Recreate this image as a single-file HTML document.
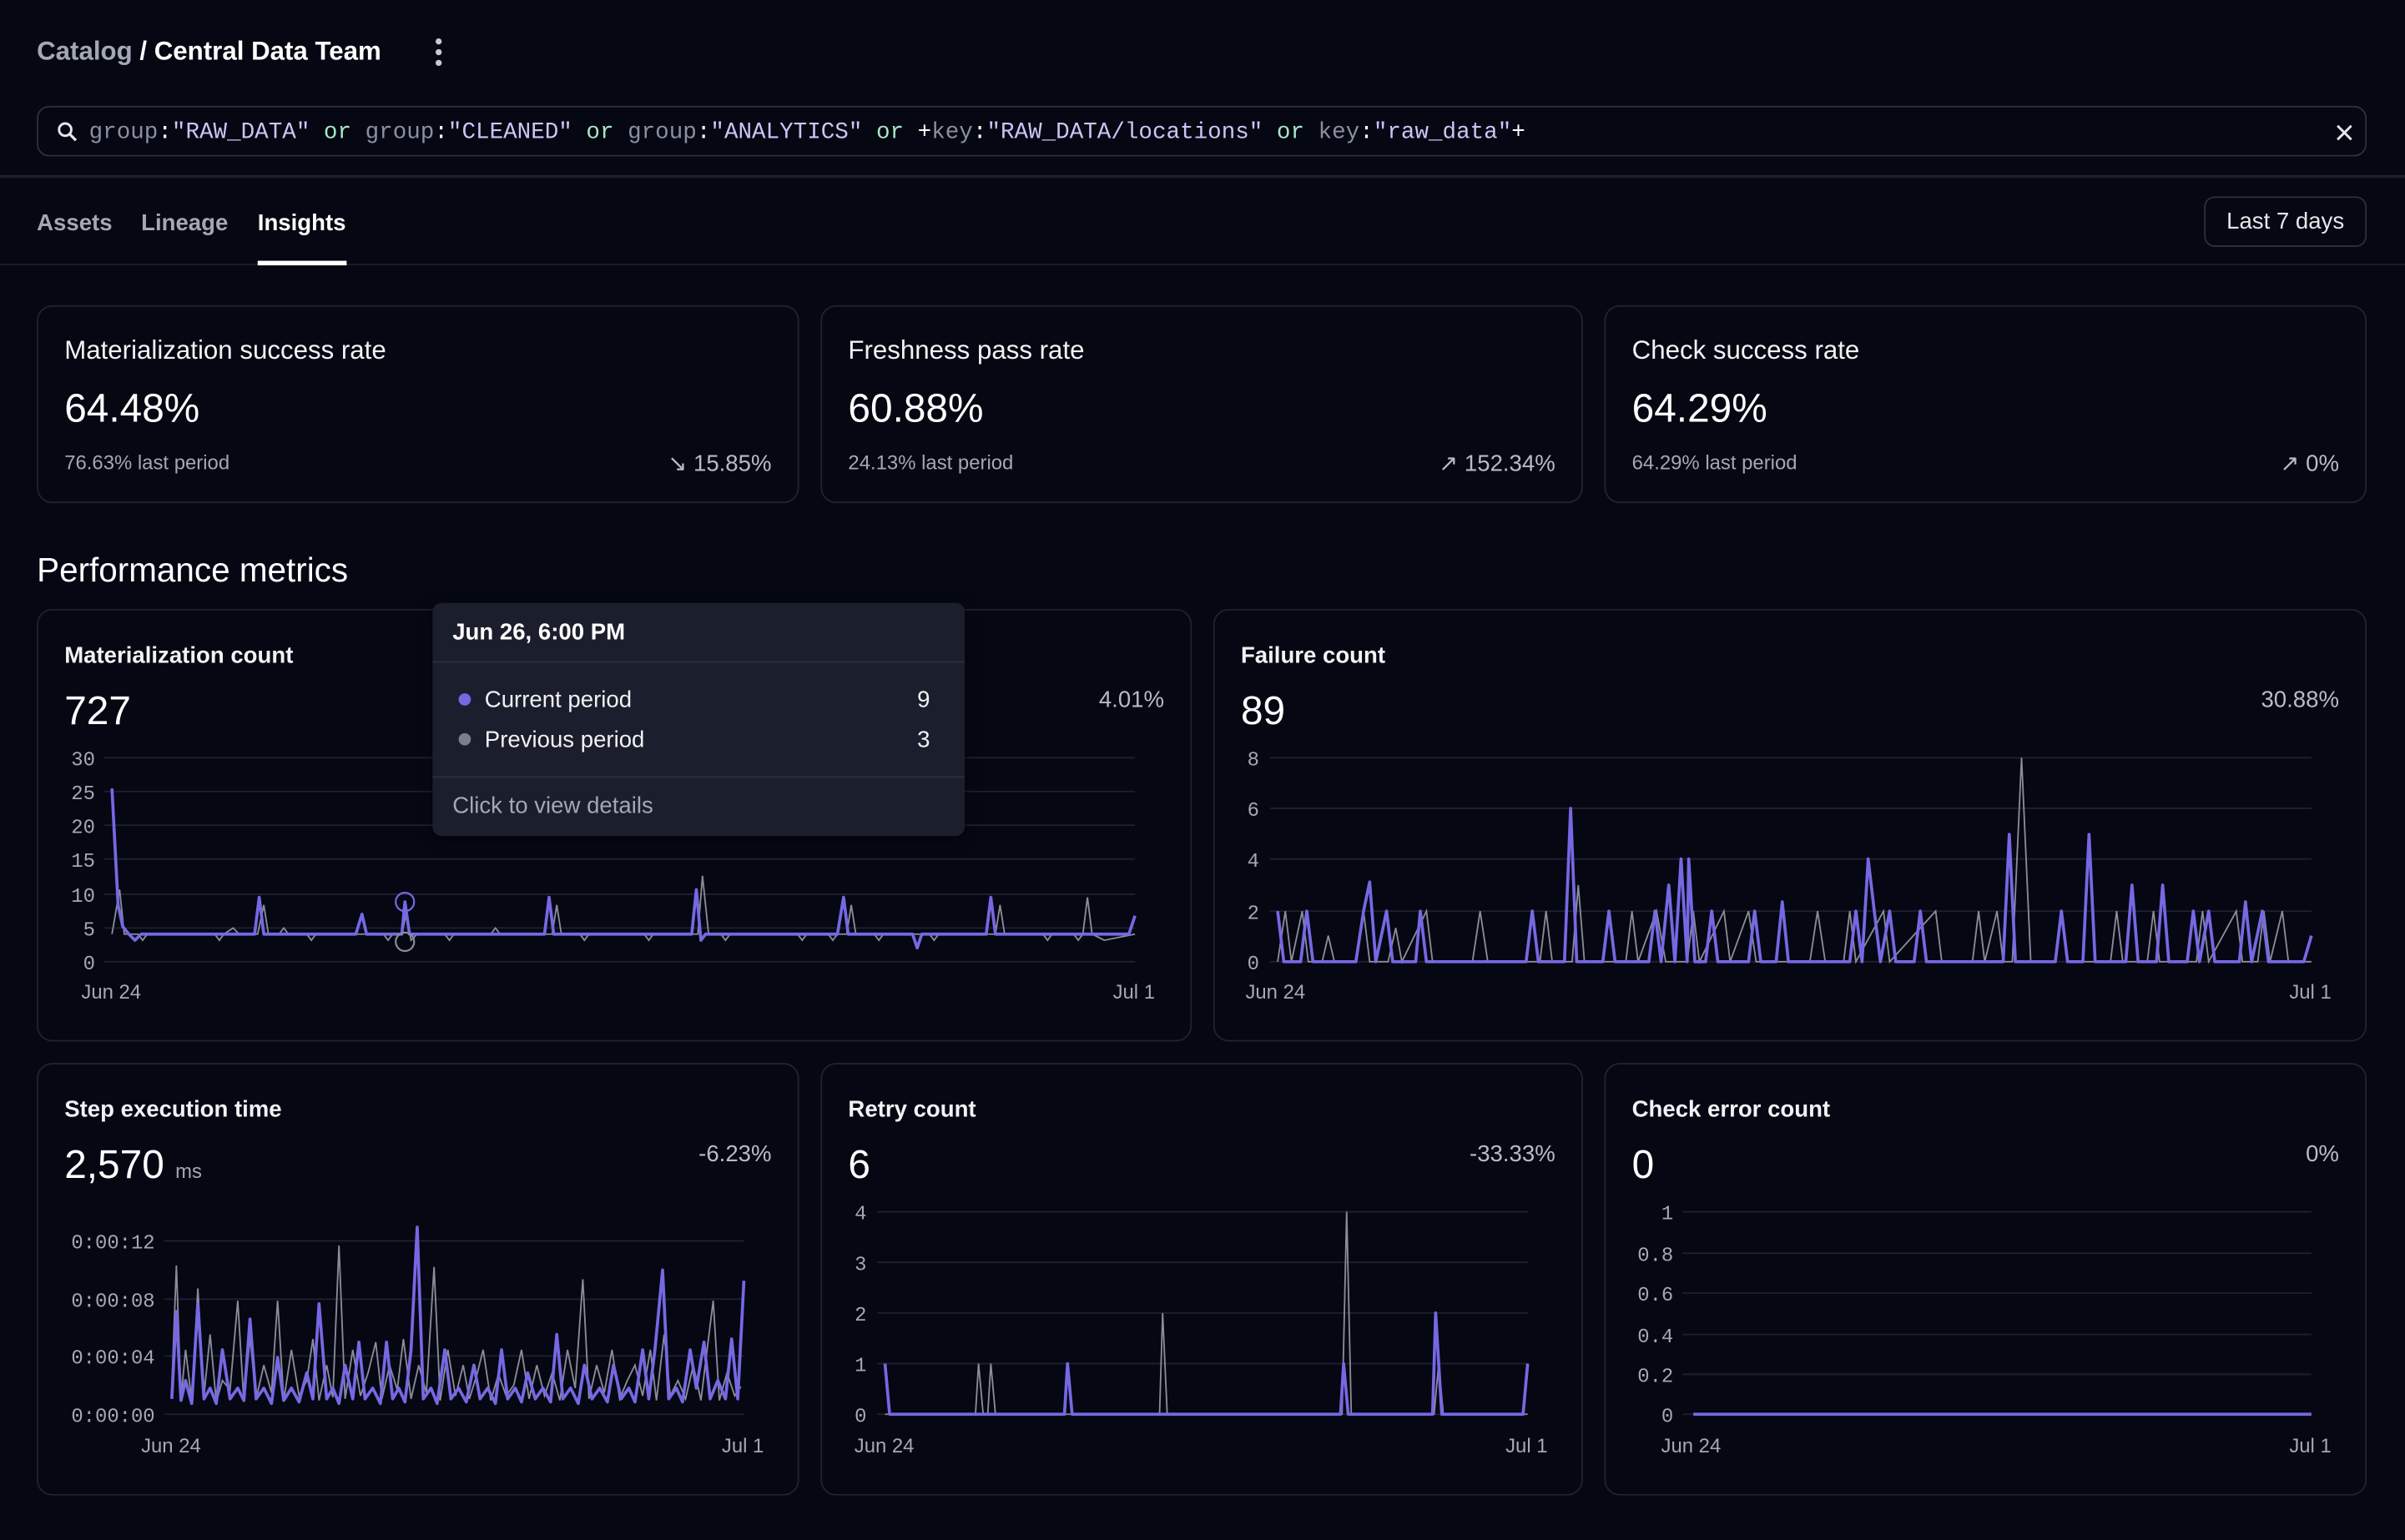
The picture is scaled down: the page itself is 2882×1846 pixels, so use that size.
<!DOCTYPE html>
<html><head><meta charset="utf-8">
<style>
html,body{margin:0;padding:0;background:#050713;overflow:hidden;width:2882px;height:1846px}
#w{position:absolute;left:0;top:0;width:1568px;height:1004px;transform:scale(1.83801,1.83865);transform-origin:0 0;font-family:"Liberation Sans",sans-serif;color:#fff}
.a{position:absolute;white-space:nowrap}
.card{position:absolute;border:1px solid #1f2231;border-radius:10px;box-sizing:border-box;background:#050713}
.t{font-size:17px;color:#f2f2f5}
.v{font-size:26px;color:#fff}
.s{font-size:13px;color:#a4a7b4}
.tr{font-size:15px;color:#b8bbc6}
.ct{font-size:15px;font-weight:bold;color:#f2f2f5}
.m{font-family:"Liberation Mono",monospace}
.ax{font-family:"Liberation Mono",monospace;font-size:13px;fill:#a4a7b4}
.xl{font-size:13px;fill:#a4a7b4;font-family:"Liberation Sans",sans-serif}
</style></head><body><div id="w">
<div class="a" style="left:24px;top:24px;font-size:17px;font-weight:bold"><span style="color:#a4a7b4">Catalog</span> / Central Data Team</div>
<svg class="a" style="left:280px;top:24px" width="12" height="20"><circle cx="6" cy="3" r="2" fill="#c8cad3"/><circle cx="6" cy="10" r="2" fill="#c8cad3"/><circle cx="6" cy="17" r="2" fill="#c8cad3"/></svg>
<div class="a" style="left:24px;top:69px;width:1519px;height:33px;border:1px solid #2c2f3d;border-radius:8px;box-sizing:border-box"></div>
<svg class="a" style="left:37px;top:79px" width="14" height="14"><circle cx="5.5" cy="5.5" r="4" stroke="#e6e6ea" stroke-width="1.6" fill="none"/><path d="M8.5 8.5L12.5 12.5" stroke="#e6e6ea" stroke-width="1.8"/></svg>
<div class="a m" style="left:58px;top:78px;font-size:15px;line-height:18px;color:#fff"><span style="color:#8b8fa0">group</span>:<span style="color:#c9c6f6">"RAW_DATA"</span> <span style="color:#a8e6c4">or</span> <span style="color:#8b8fa0">group</span>:<span style="color:#c9c6f6">"CLEANED"</span> <span style="color:#a8e6c4">or</span> <span style="color:#8b8fa0">group</span>:<span style="color:#c9c6f6">"ANALYTICS"</span> <span style="color:#a8e6c4">or</span> +<span style="color:#8b8fa0">key</span>:<span style="color:#c9c6f6">"RAW_DATA/locations"</span> <span style="color:#a8e6c4">or</span> <span style="color:#8b8fa0">key</span>:<span style="color:#c9c6f6">"raw_data"</span>+</div>
<svg class="a" style="left:1523px;top:81px" width="11" height="11"><path d="M1 1L10 10M10 1L1 10" stroke="#e6e6ea" stroke-width="1.6"/></svg>
<div class="a" style="left:0;top:114px;width:1568px;height:2px;background:#1c1f2c"></div>
<div class="a" style="left:24px;top:137px;font-size:15px;font-weight:bold;color:#a4a7b4">Assets</div>
<div class="a" style="left:92px;top:137px;font-size:15px;font-weight:bold;color:#a4a7b4">Lineage</div>
<div class="a" style="left:168px;top:137px;font-size:15px;font-weight:bold;color:#fff">Insights</div>
<div class="a" style="left:0;top:172px;width:1568px;height:1px;background:#1c1f2c"></div>
<div class="a" style="left:168px;top:170px;width:58px;height:3px;background:#fff"></div>
<div class="a" style="left:1437px;top:128px;width:106px;height:33px;border:1px solid #2c2f3d;border-radius:7px;box-sizing:border-box;font-size:15px;line-height:32px;text-align:center;color:#e6e6ea">Last 7 days</div>

<div class="card" style="left:24px;top:199px;width:497px;height:129px"></div>
<div class="card" style="left:535px;top:199px;width:497px;height:129px"></div>
<div class="card" style="left:1046px;top:199px;width:497px;height:129px"></div>
<div class="a t" style="left:42px;top:219px">Materialization success rate</div>
<div class="a v" style="left:42px;top:251px">64.48%</div>
<div class="a s" style="left:42px;top:294px">76.63% last period</div>
<div class="a tr" style="right:1065px;top:293px">↘ 15.85%</div>
<div class="a t" style="left:553px;top:219px">Freshness pass rate</div>
<div class="a v" style="left:553px;top:251px">60.88%</div>
<div class="a s" style="left:553px;top:294px">24.13% last period</div>
<div class="a tr" style="right:554px;top:293px">↗ 152.34%</div>
<div class="a t" style="left:1064px;top:219px">Check success rate</div>
<div class="a v" style="left:1064px;top:251px">64.29%</div>
<div class="a s" style="left:1064px;top:294px">64.29% last period</div>
<div class="a tr" style="right:43px;top:293px">↗ 0%</div>

<div class="a" style="left:24px;top:359px;font-size:22px;color:#fff">Performance metrics</div>

<div class="card" style="left:24px;top:397px;width:753px;height:282px"></div>
<div class="card" style="left:791px;top:397px;width:752px;height:282px"></div>
<div class="card" style="left:24px;top:693px;width:497px;height:282px"></div>
<div class="card" style="left:535px;top:693px;width:497px;height:282px"></div>
<div class="card" style="left:1046px;top:693px;width:497px;height:282px"></div>

<div class="a ct" style="left:42px;top:419px">Materialization count</div>
<div class="a v" style="left:42px;top:448px">727</div>
<div class="a tr" style="right:809px;top:448px">4.01%</div>
<div class="a ct" style="left:809px;top:419px">Failure count</div>
<div class="a v" style="left:809px;top:448px">89</div>
<div class="a tr" style="right:43px;top:448px">30.88%</div>
<div class="a ct" style="left:42px;top:715px">Step execution time</div>
<div class="a v" style="left:42px;top:744px">2,570 <span style="font-size:13px;color:#a4a7b4">ms</span></div>
<div class="a tr" style="right:1065px;top:744px">-6.23%</div>
<div class="a ct" style="left:553px;top:715px">Retry count</div>
<div class="a v" style="left:553px;top:744px">6</div>
<div class="a tr" style="right:554px;top:744px">-33.33%</div>
<div class="a ct" style="left:1064px;top:715px">Check error count</div>
<div class="a v" style="left:1064px;top:744px">0</div>
<div class="a tr" style="right:43px;top:744px">0%</div>

<svg class="a" style="left:0;top:0" width="1568" height="1004">
<g stroke="#1d2030" stroke-width="1">
<path d="M68 494H740M68 516H740M68 538H740M68 560H740M68 583H740M68 605H740M68 627H740"/>
<path d="M828 494H1507M828 527H1507M828 560H1507M828 594H1507M828 627H1507"/>
<path d="M107 809H485M107 847H485M107 884H485M107 922H485"/>
<path d="M572 790H996M572 823H996M572 856H996M572 889H996M572 922H996"/>
<path d="M1097 790H1507M1097 817H1507M1097 843H1507M1097 870H1507M1097 896H1507M1097 922H1507"/>
</g>
<g class="ax" text-anchor="end">
<text x="62" y="499">30</text><text x="62" y="521">25</text><text x="62" y="543">20</text><text x="62" y="565">15</text><text x="62" y="588">10</text><text x="62" y="610">5</text><text x="62" y="632">0</text>
<text x="821" y="499">8</text><text x="821" y="532">6</text><text x="821" y="565">4</text><text x="821" y="599">2</text><text x="821" y="632">0</text>
<text x="101" y="814">0:00:12</text><text x="101" y="852">0:00:08</text><text x="101" y="889">0:00:04</text><text x="101" y="927">0:00:00</text>
<text x="565" y="795">4</text><text x="565" y="828">3</text><text x="565" y="861">2</text><text x="565" y="894">1</text><text x="565" y="927">0</text>
<text x="1091" y="795">1</text><text x="1091" y="822">0.8</text><text x="1091" y="848">0.6</text><text x="1091" y="875">0.4</text><text x="1091" y="901">0.2</text><text x="1091" y="927">0</text>
</g>
<g class="xl">
<text x="53" y="651">Jun 24</text><text x="753" y="651" text-anchor="end">Jul 1</text>
<text x="812" y="651">Jun 24</text><text x="1520" y="651" text-anchor="end">Jul 1</text>
<text x="92" y="947">Jun 24</text><text x="498" y="947" text-anchor="end">Jul 1</text>
<text x="557" y="947">Jun 24</text><text x="1009" y="947" text-anchor="end">Jul 1</text>
<text x="1083" y="947">Jun 24</text><text x="1520" y="947" text-anchor="end">Jul 1</text>
</g>
<g fill="none" stroke="#8a8d99" stroke-width="1">
<path d="M73 609L78 580L81 609L90 609L93 613L96 609L140 609L143 613L146 609L152 605L156 609L168 609L172 590L175 609L182 609L185 605L188 609L200 609L203 613L206 609L250 609L253 613L256 609L262 609L265 595L268 613L272 609L290 609L293 613L296 609L320 609L323 605L326 609L360 609L363 590L366 609L378 609L381 613L384 609L420 609L423 613L426 609L455 609L458 571L462 609L470 609L473 613L476 609L520 609L523 613L526 609L540 609L543 613L546 609L552 609L555 590L558 609L570 609L573 613L576 609L606 609L609 613L612 609L649 609L652 590L655 609L680 609L683 613L686 609L700 609L703 613L706 609L709 585L712 609L720 613L740 609"/>
<path d="M833 627L838 594L842 627L849 594L853 627L862 627L866 610L870 627L884 627L889 594L893 627L905 627L910 605L914 627L930 594L934 627L960 627L965 594L970 627L1004 627L1008 594L1012 627L1025 627L1029 577L1033 627L1060 627L1064 594L1068 627L1080 594L1086 627L1100 627L1104 594L1108 627L1124 594L1128 627L1140 594L1145 627L1180 627L1185 594L1190 627L1202 627L1206 594L1210 627L1228 594L1232 627L1262 594L1266 627L1286 627L1290 594L1294 627L1302 594L1306 627L1312 627L1318 494L1324 627L1340 627L1344 594L1348 627L1376 627L1380 594L1384 627L1400 627L1404 594L1408 627L1432 627L1436 594L1440 627L1458 594L1462 627L1472 627L1476 594L1480 627L1488 594L1492 627L1507 627"/>
<path d="M112 905L115 825L118 912L121 880L125 913L129 840L133 910L137 870L141 914L145 900L150 906L155 848L159 914L163 872L167 912L172 890L177 908L181 848L185 913L190 880L195 910L200 900L204 873L208 913L213 890L217 911L221 812L225 912L230 880L235 910L240 895L245 875L249 912L254 890L259 906L263 873L268 912L273 890L278 908L283 826L287 913L292 880L297 910L302 890L306 912L311 896L315 880L320 913L325 896L330 910L335 903L340 880L345 912L350 890L355 910L360 895L365 913L370 880L375 905L380 834L384 912L389 890L394 908L399 880L404 912L409 900L414 890L419 910L424 880L428 913L433 870L437 910L442 900L447 912L452 890L457 913L461 880L465 848L469 913L474 895L479 910L483 904"/>
<path d="M577 922L636 922L638 889L641 922L644 922L646 889L649 922L756 922L758 856L761 922L875 922L878 790L881 922L935 922L938 889L941 922L996 922"/>
</g>
<g fill="none" stroke="#7668e3" stroke-width="2" stroke-linejoin="round">
<path d="M73 514L77 590L80 604L84 609L88 613L92 609L166 609L169 585L172 609L232 609L236 596L239 609L262 609L264 588L267 609L355 609L358 585L361 609L451 609L454 580L457 613L460 609L546 609L550 585L553 609L595 609L598 618L601 609L643 609L646 585L649 609L736 609L740 597"/>
<path d="M833 594L837 627L848 627L852 594L856 627L884 627L889 594L893 575L897 627L904 594L908 627L923 627L926 594L930 627L995 627L999 594L1003 627L1020 627L1024 527L1028 627L1045 627L1049 594L1053 627L1075 627L1079 594L1083 627L1088 577L1092 627L1096 560L1100 627L1101 560L1105 627L1112 627L1116 594L1120 627L1140 627L1144 594L1148 627L1158 627L1162 588L1166 627L1206 627L1210 594L1214 627L1218 560L1222 594L1226 627L1232 594L1236 627L1248 627L1252 594L1256 627L1306 627L1310 544L1314 627L1340 627L1344 594L1348 627L1358 627L1362 544L1366 627L1386 627L1390 577L1394 627L1406 627L1410 577L1414 627L1426 627L1430 594L1434 627L1440 594L1444 627L1460 627L1464 588L1468 627L1475 594L1479 627L1502 627L1507 610"/>
<path d="M112 912L115 855L118 913L121 900L125 915L129 850L133 912L137 905L141 915L145 880L150 912L155 905L159 913L163 860L167 912L172 905L177 915L181 885L185 913L190 905L195 914L200 895L204 912L208 850L213 912L217 905L221 915L225 890L230 912L234 875L238 912L243 905L248 915L252 875L256 912L260 905L264 914L268 880L272 800L276 912L281 905L285 915L290 880L294 912L299 905L304 914L309 890L313 912L318 905L323 915L327 880L331 912L336 905L340 914L344 895L349 912L354 905L359 914L363 870L367 912L372 905L377 915L381 890L386 912L391 905L396 914L400 890L405 912L410 905L414 914L419 880L423 912L427 880L432 828L436 912L441 905L445 914L450 880L454 905L459 875L463 912L468 900L473 912L477 873L481 912L485 835"/>
<path d="M577 889L580 922L694 922L696 889L699 922L874 922L876 889L879 922L934 922L936 856L940 922L993 922L996 889"/>
<path d="M1104 922H1507"/>
</g>
<circle cx="264" cy="588" r="6" fill="none" stroke="#7668e3" stroke-width="1.2"/>
<circle cx="264" cy="614" r="6" fill="none" stroke="#8a8d99" stroke-width="1.2"/>
</svg>

<div class="a" style="left:282px;top:393px;width:347px;height:152px;background:#1b1e2c;border-radius:6px;box-shadow:0 2px 8px rgba(0,0,0,.5)"></div>
<div class="a" style="left:295px;top:404px;font-size:15px;font-weight:bold;color:#fff">Jun 26, 6:00 PM</div>
<div class="a" style="left:282px;top:431px;width:347px;height:1px;background:#2b2e3c"></div>
<div class="a" style="left:299px;top:452px;width:8px;height:8px;border-radius:50%;background:#7668e3"></div>
<div class="a" style="left:316px;top:448px;font-size:15px;color:#f2f2f5">Current period</div>
<div class="a" style="left:598px;top:448px;font-size:15px;color:#f2f2f5">9</div>
<div class="a" style="left:299px;top:478px;width:8px;height:8px;border-radius:50%;background:#7a7f8f"></div>
<div class="a" style="left:316px;top:474px;font-size:15px;color:#f2f2f5">Previous period</div>
<div class="a" style="left:598px;top:474px;font-size:15px;color:#f2f2f5">3</div>
<div class="a" style="left:282px;top:506px;width:347px;height:1px;background:#2b2e3c"></div>
<div class="a" style="left:295px;top:517px;font-size:15px;color:#a4a7b4">Click to view details</div>
</div></body></html>
